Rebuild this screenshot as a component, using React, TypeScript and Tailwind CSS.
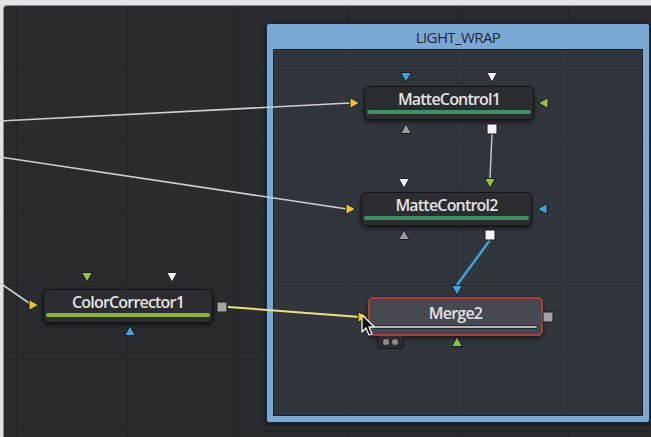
import type { ReactNode } from 'react';

// ============================================================================
// Types
// ============================================================================

type Dir = 'up' | 'down' | 'left' | 'right';

interface PortProps {
  x: number;
  y: number;
  dir?: Dir;
  color: string;
  square?: boolean;
}

interface NodeProps {
  x: number;
  y: number;
  w: number;
  h: number;
  label: string;
  bar: string;
  selected?: boolean;
}

// ============================================================================
// Pieces
// ============================================================================

const TRI: Record<Dir, string> = {
  up: '6,1 11.3,10.5 0.7,10.5',
  down: '0.7,1.5 11.3,1.5 6,11',
  left: '1.5,6 11,0.7 11,11.3',
  right: '1,0.7 10.5,6 1,11.3',
};

function Port({ x, y, dir = 'down', color, square }: PortProps) {
  return (
    <svg
      width="12"
      height="12"
      viewBox="0 0 12 12"
      className="absolute"
      style={{ left: x - 6, top: y - 6 }}
    >
      {square ? (
        <rect x="1" y="1" width="10" height="10" fill={color} stroke="#1a1a1a" strokeWidth="1" />
      ) : (
        <polygon points={TRI[dir]} fill={color} stroke="#141414" strokeWidth="0.9" strokeLinejoin="round" />
      )}
    </svg>
  );
}

function Node({ x, y, w, h, label, bar, selected }: NodeProps) {
  return (
    <div
      className={`absolute flex flex-col items-stretch rounded-[5px] shadow-[0_2px_4px_rgba(0,0,0,0.6)] ${
        selected ? 'border-2 border-[#b13b36] bg-[#46494f]' : 'border border-[#141517] bg-[#2b2c30]'
      }`}
      style={{ left: x, top: y, width: w, height: h }}
    >
      <div className="flex-1 flex items-center justify-center pt-[1px] text-[16px] leading-4 font-semibold text-[#e2e2e2] font-['Open_Sans',sans-serif] tracking-[-0.8px]">
        {label}
      </div>
      <div
        className={`mx-[2px] mb-[5px] h-[4px] rounded-full ${selected ? 'mx-[3px] border border-[#2a2a2a]' : ''}`}
        style={{ backgroundColor: bar }}
      />
    </div>
  );
}

function Lines() {
  return (
    <svg width="651" height="437" className="absolute inset-0">
      <line x1="0" y1="121" x2="350" y2="103" stroke="#cfcfcf" strokeWidth="1.6" />
      <line x1="0" y1="157" x2="347" y2="209" stroke="#cfcfcf" strokeWidth="1.6" />
      <line x1="0" y1="283" x2="29" y2="303" stroke="#cfcfcf" strokeWidth="1.6" />
      <line x1="492" y1="134" x2="490" y2="178" stroke="#c4c4c4" strokeWidth="1.5" />
      <line x1="490" y1="240" x2="457" y2="285" stroke="#3ba2dc" strokeWidth="2.5" />
      <line x1="228" y1="307" x2="360" y2="317" stroke="#ece27c" strokeWidth="2" />
    </svg>
  );
}

function Cursor() {
  return (
    <svg width="16" height="24" viewBox="0 0 16 24" className="absolute left-[361px] top-[314px]">
      <path
        d="M1 1 L1 18 L5 14 L8 21 L11 20 L8 13 L13.5 13 Z"
        fill="#111"
        stroke="#f2f2f2"
        strokeWidth="1.3"
        strokeLinejoin="round"
      />
    </svg>
  );
}

function Group({ children }: { children?: ReactNode }) {
  return (
    <div className="absolute left-[266px] top-[23px] w-[384px] h-[400px] flex flex-col rounded-[3px] bg-[#7aa8d4] border border-[#1b2a38] shadow-[0_1px_4px_rgba(0,0,0,0.7)]">
      <div className="h-[25px] flex items-center justify-center pt-[1px] text-[15px] font-medium text-[#1c2834] font-['Open_Sans',sans-serif] tracking-[-0.6px]">
        LIGHT_WRAP
      </div>
      <div className="flex-1 mx-[6px] mb-[6px] border border-[#1e2329] bg-[#31353c] bg-[linear-gradient(to_right,#2d3137_1px,transparent_1px),linear-gradient(to_bottom,#2d3137_1px,transparent_1px)] bg-[size:110.5px_73px] bg-[position:72px_16px]">
        {children}
      </div>
    </div>
  );
}

// ============================================================================
// App
// ============================================================================

export default function App() {
  return (
    <div className="relative w-[651px] h-[437px] overflow-hidden bg-[#e3e3e3]">
      <div className="ml-[3px] mt-[5px] h-[432px] rounded-tl-[4px] border-t border-l border-[#8d8d8d] bg-[#2a2b2f] bg-[linear-gradient(to_right,#202124_1px,transparent_1px),linear-gradient(to_bottom,#202124_1px,transparent_1px)] bg-[size:110.5px_73px] bg-[position:12px_60px]" />

      <Group />
      <Lines />

      {/* ColorCorrector1 */}
      <Node x={43} y={289} w={170} h={34} label="ColorCorrector1" bar="#8cb33a" />
      <Port x={87} y={277} dir="down" color="#8ec33b" />
      <Port x={172} y={277} dir="down" color="#f2f2f2" />
      <Port x={34} y={305} dir="right" color="#f3c31c" />
      <Port x={130} y={331} dir="up" color="#3ea6de" />
      <Port x={222} y={307} square color="#a3a3a3" />

      {/* MatteControl1 */}
      <Node x={364} y={86} w={170} h={34} label="MatteControl1" bar="#3e9262" />
      <Port x={406} y={77} dir="down" color="#3ea6de" />
      <Port x={492} y={77} dir="down" color="#f2f2f2" />
      <Port x={355} y={103} dir="right" color="#f3c31c" />
      <Port x={543} y={103} dir="left" color="#8ec33b" />
      <Port x={406} y={129} dir="up" color="#9c9c9c" />
      <Port x={492} y={129} square color="#f4f4f4" />

      {/* MatteControl2 */}
      <Node x={361} y={192} w={171} h={34} label="MatteControl2" bar="#3e9262" />
      <Port x={404} y={183} dir="down" color="#f2f2f2" />
      <Port x={490} y={183} dir="down" color="#8ec33b" />
      <Port x={351} y={209} dir="right" color="#f3c31c" />
      <Port x={542} y={209} dir="left" color="#3ea6de" />
      <Port x={404} y={235} dir="up" color="#9c9c9c" />
      <Port x={490} y={235} square color="#f4f4f4" />

      {/* Merge2 */}
      <Node x={368} y={297} w={175} h={39} label="Merge2" bar="#b4b4b4" selected />
      <Port x={457} y={290} dir="down" color="#3ea6de" />
      <Port x={363} y={317} dir="right" color="#f3c31c" />
      <Port x={457} y={342} dir="up" color="#8ec33b" />
      <Port x={548} y={317} square color="#a3a3a3" />
      <div className="absolute left-[377px] top-[336px] w-[27px] h-[13px] flex items-center justify-center gap-[3px] rounded-b-[4px] bg-[#2b2c30] border border-t-0 border-[#141517]">
        <span className="w-[6px] h-[6px] rounded-full bg-[#8a8a8a]" />
        <span className="w-[6px] h-[6px] rounded-full bg-[#8a8a8a]" />
      </div>
      <Cursor />
    </div>
  );
}
